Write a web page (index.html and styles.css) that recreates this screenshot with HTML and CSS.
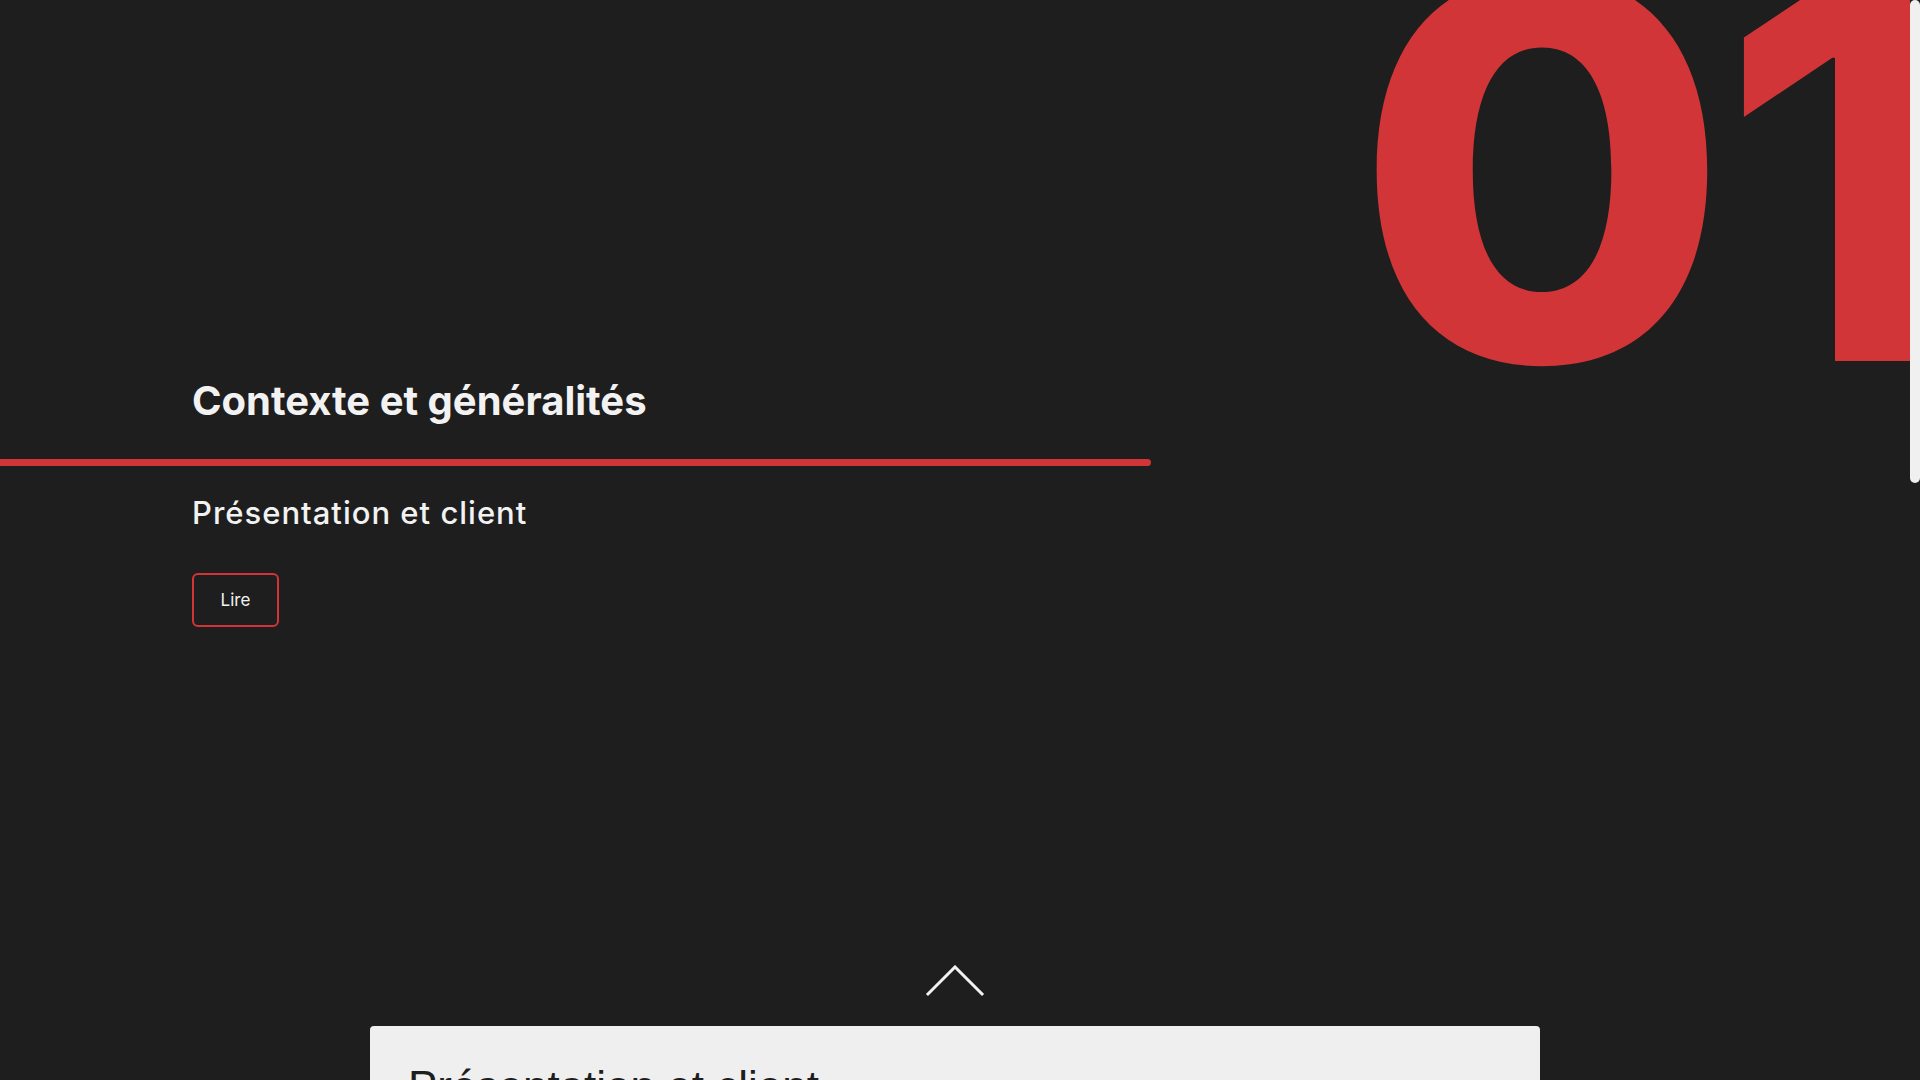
FILE: index.html
```html
<!DOCTYPE html>
<html lang="fr">
<head>
<meta charset="utf-8">
<title>Contexte et généralités</title>
<link rel="stylesheet" href="styles.css">
</head>
<body>
<div class="page">
  <section class="chapter">
    <div class="chapter-number">01</div>
    <h1 class="chapter-title">Contexte et généralités</h1>
    <div class="chapter-rule"></div>
    <h2 class="chapter-sub">Présentation et client</h2>
    <a class="btn-read" href="#presentation">Lire</a>
    <div class="chevron-row">
      <svg class="chevron" width="60" height="32" viewBox="0 0 60 32" aria-hidden="true">
        <polyline points="3,29 30,2 57,29" fill="none" stroke="#f2f2f2" stroke-width="3" stroke-linecap="square"/>
      </svg>
    </div>
  </section>
  <article class="card" id="presentation">
    <h2 class="card-title">Présentation et client</h2>
  </article>
</div>
<div class="fake-scrollbar"></div>
</body>
</html>
```
FILE: styles.css
```css
html, body {
  margin: 0;
  padding: 0;
  background: #1e1e1e;
  height: 100%;
  overflow: hidden;
}
body {
  font-family: "Inter", "Lato", sans-serif;
  color: #f2f2f2;
}
.page {
  margin-right: 10px;
  height: 1080px;
  overflow: hidden;
  position: relative;
}
.chapter {
  position: relative;
  padding-top: 377px;
  height: 649px;
}
.chapter-number {
  position: absolute;
  top: -92px;
  left: 1355px;
  font-family: "Inter", sans-serif;
  font-weight: 800;
  font-size: 525px;
  line-height: 1;
  letter-spacing: -9px;
  color: #d13537;
  white-space: nowrap;
  transform: scaleX(1.03);
  transform-origin: left bottom;
}
.chapter-title {
  margin: 0 0 0 192px;
  font-size: 40px;
  line-height: 48px;
  font-weight: 700;
}
.chapter-rule {
  margin-top: 34px;
  width: 1151px;
  height: 7px;
  background: #d13537;
  border-radius: 0 4px 4px 0;
}
.chapter-sub {
  margin: 29px 0 0 192px;
  font-size: 31px;
  line-height: 36px;
  font-weight: 500;
  letter-spacing: 1px;
}
.btn-read {
  margin: 42px 0 0 192px;
  width: 87px;
  height: 54px;
  box-sizing: border-box;
  border: 2px solid #d13537;
  border-radius: 6px;
  display: flex;
  align-items: center;
  justify-content: center;
  color: #f2f2f2;
  text-decoration: none;
  font-size: 17px;
}
.chevron-row {
  display: flex;
  justify-content: center;
  margin-top: 338px;
}
.chevron {
  display: block;
}
.card {
  width: 1170px;
  margin: 0 auto;
  background: #efefef;
  border-radius: 4px 4px 0 0;
  padding: 36px 38px 60px;
  box-sizing: border-box;
  min-height: 400px;
}
.card-title {
  margin: 0;
  font-family: "Liberation Sans", Arial, sans-serif;
  font-weight: 400;
  font-size: 44px;
  color: #1e1e1e;
}
.fake-scrollbar {
  position: fixed;
  top: 0;
  right: 0;
  width: 10px;
  height: 483px;
  background: #f0f0f0;
  border-radius: 5px;
}
```
